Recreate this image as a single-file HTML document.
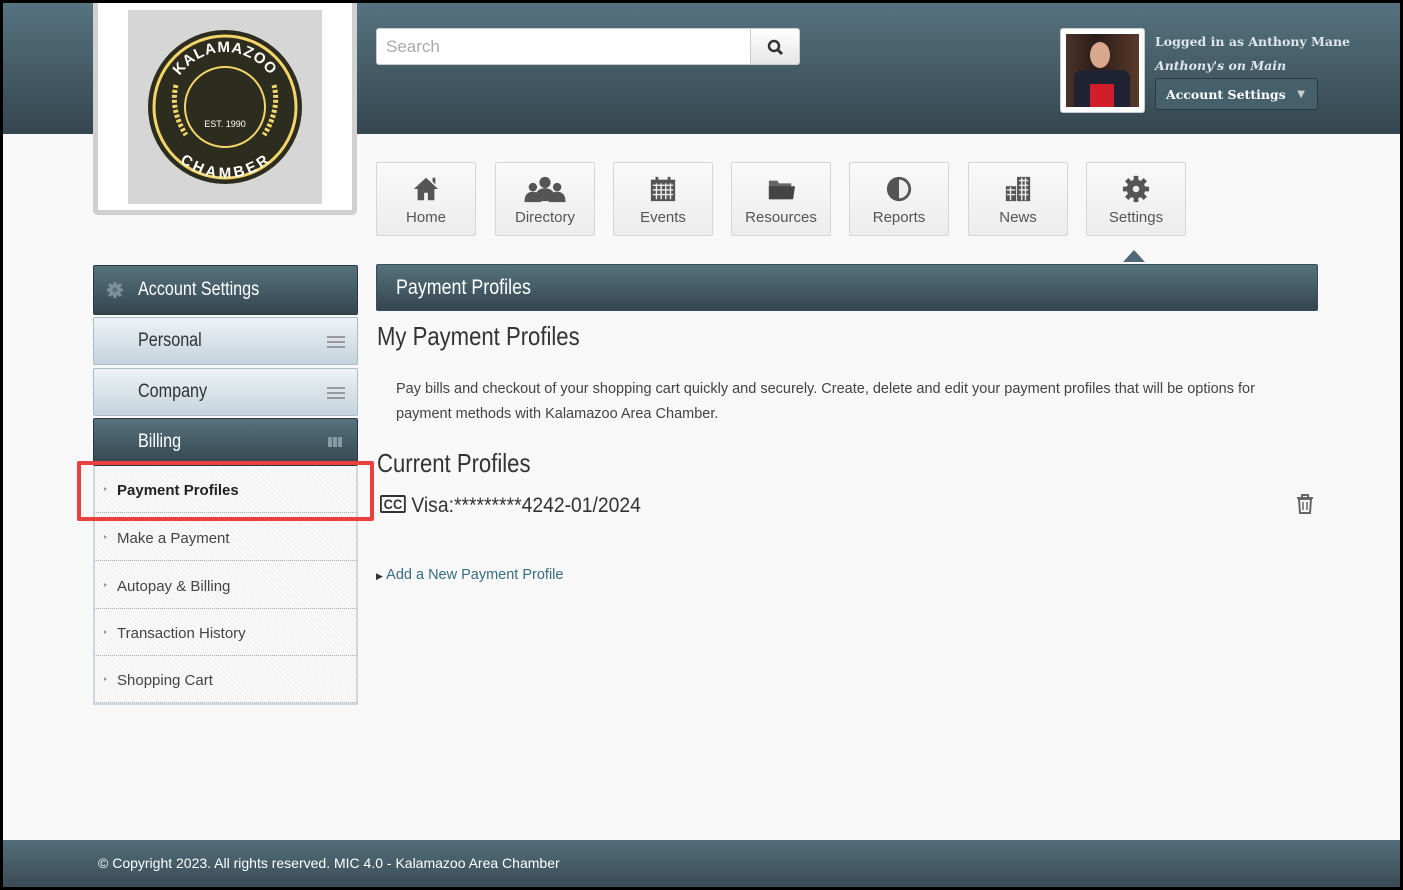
<!DOCTYPE html>
<html><head><meta charset="utf-8"><style>
*{box-sizing:border-box;margin:0;padding:0}
body{width:1403px;height:890px;background:#000;font-family:"Liberation Sans",sans-serif;position:relative;overflow:hidden}
.pg{position:absolute;left:3px;top:3px;width:1397px;height:884px;background:#f8f8f8;overflow:hidden}
.hdr{position:absolute;left:0;top:0;width:1397px;height:131px;background:linear-gradient(#56737f,#34464f)}
.ab{position:absolute}
.nar{display:inline-block;transform:scaleX(.85);transform-origin:0 0;white-space:nowrap}
.nav{position:absolute;top:159px;width:100px;height:74px;border:1px solid #d6d6d6;background:linear-gradient(#fafafa,#ececec);border-radius:2px;text-align:center;color:#555;font-size:15px}
.nav svg{display:block;margin:12px auto 6px;height:28px}
.side{position:absolute;left:90px;width:265px;border-radius:2px}
.dark{background:linear-gradient(#56727d,#34464f);color:#fff;border:1px solid #2a3840}
.light{background:linear-gradient(#eef3f6,#c4d3dc);border:1px solid #a8bccb;color:#333}
.lbl{position:absolute;left:44px;font-size:19px}
.item{position:absolute;left:91px;width:263px;height:47px;border-bottom:1px dotted #aab;font-size:15px;color:#444;padding:16px 0 0 23px}
.item:before{content:"";position:absolute;left:10px;top:21px;border-left:3px solid #999;border-top:2.5px solid transparent;border-bottom:2.5px solid transparent}
.srf{font-family:"DejaVu Serif",serif;font-weight:bold;font-size:12.5px;color:#dfe6ea;white-space:nowrap}
</style></head><body><div class="pg">
<div class="hdr"></div>
<div class="ab" style="left:90px;top:-3px;width:264px;height:215px;background:#fff;border:5px solid #d0d0d0;border-top:0;border-radius:0 0 5px 5px"></div>
<div class="ab" style="left:125px;top:7px;width:194px;height:194px;background:#d6d6d6">
<svg width="194" height="194" viewBox="0 0 194 194"><defs><path id="t1" d="M42 97a55 55 0 0 1 110 0"/><path id="t2" d="M38 97a59 59 0 0 0 118 0"/></defs>
<circle cx="97" cy="97" r="77" fill="#2d2d1f"/><circle cx="97" cy="97" r="71" fill="none" stroke="#f3d56a" stroke-width="3"/><circle cx="97" cy="97" r="40" fill="none" stroke="#f3d56a" stroke-width="2"/>
<text fill="#fff" font-size="15" font-weight="bold" letter-spacing="1"><textPath href="#t1" startOffset="50%" text-anchor="middle">KALAMAZOO</textPath></text>
<text fill="#fff" font-size="15" font-weight="bold" letter-spacing="1" dy="12"><textPath href="#t2" startOffset="50%" text-anchor="middle">CHAMBER</textPath></text>
<text x="97" y="117" text-anchor="middle" fill="#fff" font-size="9">EST. 1990</text>
<path d="M48 75 Q42 100 58 125 M146 75 Q152 100 136 125" stroke="#f3d56a" stroke-width="5" fill="none" stroke-dasharray="3 2"/></svg></div>
<div class="ab" style="left:373px;top:25px;width:375px;height:37px;background:#fff;border:1px solid #ccc;border-radius:3px 0 0 3px;color:#aaa;font-size:17px;padding:8px 9px">Search</div>
<div class="ab" style="left:747px;top:25px;width:50px;height:37px;background:linear-gradient(#fff,#e6e6e6);border:1px solid #ccc;border-radius:0 3px 3px 0">
<svg width="50" height="37"><circle cx="23" cy="17" r="5" fill="none" stroke="#333" stroke-width="2.5"/><path d="M27 21l4 4" stroke="#333" stroke-width="3"/></svg></div>
<div class="ab" style="left:1057px;top:25px;width:85px;height:85px;background:#fff;border:1px solid #ccc;border-radius:3px;padding:5px"><div style="width:73px;height:73px;background:linear-gradient(90deg,#4a3326,#2a1c18 40%,#5a3a2a);position:relative"><div style="position:absolute;left:24px;top:8px;width:20px;height:26px;border-radius:50%;background:#d9a78c"></div><div style="position:absolute;left:8px;top:36px;width:56px;height:37px;background:#1e2233;border-radius:8px 8px 0 0"></div><div style="position:absolute;left:24px;top:50px;width:24px;height:23px;background:#d11e2a"></div></div></div>
<div class="ab srf" style="left:1152px;top:31px">Logged in as Anthony Mane</div>
<div class="ab srf" style="left:1152px;top:55px;font-style:italic">Anthony's on Main</div>
<div class="ab srf" style="left:1152px;top:75px;width:163px;height:32px;background:#45606b;border:1px solid #2a3a42;border-radius:3px;color:#fff;padding:8px 10px">Account Settings<span style="font-size:10px;color:#ccc;position:absolute;right:12px;top:10px">▼</span></div>
<div class="nav" style="left:373px"><svg viewBox="0 0 30 30" width="30"><path d="M15 3 2 15h4v12h7v-8h4v8h7V15h4z M22 3h3v7l-3-3z" fill="#555"/></svg>Home</div>
<div class="nav" style="left:492px"><svg viewBox="0 0 46 30" width="46"><circle cx="23" cy="8" r="6" fill="#555"/><path d="M12 28q0-14 11-14t11 14z" fill="#555"/><circle cx="10" cy="13" r="4.5" fill="#555"/><path d="M1 29q0-11 9-11t9 11z" fill="#555"/><circle cx="36" cy="13" r="4.5" fill="#555"/><path d="M27 29q0-11 9-11t9 11z" fill="#555"/></svg>Directory</div>
<div class="nav" style="left:610px"><svg viewBox="0 0 30 30" width="30"><rect x="2" y="5" width="26" height="23" fill="#555"/><path d="M4 11h22M4 16h22M4 21h22M8 9v17M13 9v17M18 9v17M23 9v17" stroke="#eee" stroke-width="1.5"/><rect x="7" y="2" width="3" height="5" fill="#555"/><rect x="20" y="2" width="3" height="5" fill="#555"/></svg>Events</div>
<div class="nav" style="left:728px"><svg viewBox="0 0 30 30" width="30"><path d="M2 6h9l2 3h13v17H2z" fill="#666"/><path d="M2 12h28l-2 14H2z" fill="#444"/></svg>Resources</div>
<div class="nav" style="left:846px"><svg viewBox="0 0 30 30" width="30"><circle cx="15" cy="15" r="13" fill="#555"/><path d="M15 5a10 10 0 0 1 0 20z" fill="#eee"/></svg>Reports</div>
<div class="nav" style="left:965px"><svg viewBox="0 0 30 30" width="30"><rect x="14" y="2" width="14" height="26" fill="#555"/><rect x="2" y="12" width="11" height="16" fill="#555"/><path d="M16 6h10M16 11h10M16 16h10M16 21h10M19 3v24M23 3v24M3 16h9M3 21h9M7 13v14" stroke="#eee" stroke-width="1.5"/></svg>News</div>
<div class="nav" style="left:1083px"><svg viewBox="0 0 30 30" width="30"><circle cx="15" cy="15" r="10" fill="#555"/><path d="M15 1v28M1 15h28M5 5l20 20M25 5 5 25" stroke="#555" stroke-width="5"/><circle cx="15" cy="15" r="3.5" fill="#eee"/></svg>Settings</div>
<div class="ab" style="left:1120px;top:247px;border-left:11px solid transparent;border-right:11px solid transparent;border-bottom:12px solid #4f6a76"></div>
<div class="ab dark" style="left:373px;top:261px;width:942px;height:47px;border-radius:2px;font-size:21px;padding:11px 19px;border-color:#3a4d56"><span class="nar">Payment Profiles</span></div>
<div class="ab" style="left:374px;top:318px;font-size:26px;color:#333"><span class="nar">My Payment Profiles</span></div>
<div class="ab" style="left:393px;top:374px;width:910px;font-size:14.5px;line-height:25px;color:#444">Pay bills and checkout of your shopping cart quickly and securely. Create, delete and edit your payment profiles that will be options for payment methods with Kalamazoo Area Chamber.</div>
<div class="ab" style="left:374px;top:445px;font-size:26px;color:#333"><span class="nar">Current Profiles</span></div>
<div class="ab" style="left:377px;top:491px;font-size:21px;color:#333"><span class="nar" style="transform:scaleX(.92)"><span style="display:inline-block;border:2px solid #333;background:#fff;font-size:14px;font-weight:bold;padding:0 2px;line-height:14px;vertical-align:3px;border-radius:2px">CC</span> Visa:*********4242-01/2024</span></div>
<svg class="ab" style="left:1293px;top:491px" width="18" height="20"><path d="M1 4h16M6 4V1h6v3M3 5h12l-1 14H4z" stroke="#666" stroke-width="2" fill="none"/><path d="M7 8v8M11 8v8" stroke="#666" stroke-width="1.5"/></svg>
<div class="ab" style="left:373px;top:564px;font-size:14.5px;color:#3a6c86"><span style="font-size:9px;color:#333">▶</span> Add a New Payment Profile</div>
<div class="side dark" style="top:262px;height:50px"><svg class="ab" style="left:12px;top:15px" width="18" height="18"><circle cx="9" cy="9" r="6" fill="#7d8f97"/><path d="M9 1v16M1 9h16M3 3l12 12M15 3 3 15" stroke="#7d8f97" stroke-width="3"/><circle cx="9" cy="9" r="2.5" fill="#56727d"/></svg><span class="lbl nar" style="top:13px">Account Settings</span></div>
<div class="side light" style="top:314px;height:48px"><span class="lbl nar" style="top:12px">Personal</span><span class="ab" style="right:12px;top:18px;width:18px;height:12px;border-top:2px solid #999;border-bottom:2px solid #999"><span class="ab" style="left:0;right:0;top:3px;height:2px;background:#999"></span></span></div>
<div class="side light" style="top:365px;height:48px"><span class="lbl nar" style="top:12px">Company</span><span class="ab" style="right:12px;top:18px;width:18px;height:12px;border-top:2px solid #999;border-bottom:2px solid #999"><span class="ab" style="left:0;right:0;top:3px;height:2px;background:#999"></span></span></div>
<div class="side dark" style="top:415px;height:48px"><span class="lbl nar" style="top:12px">Billing</span><span class="ab" style="right:14px;top:18px;width:15px;height:10px;background:repeating-linear-gradient(90deg,#8a9aa2 0 4px,transparent 4px 5px)"></span></div>
<div class="ab" style="left:90px;top:463px;width:265px;height:239px;background:repeating-linear-gradient(45deg,#f4f4f4 0 2px,#f8f8f8 2px 4px);border:2px solid #cdd8e0;border-top:0"></div>
<div class="item" style="top:463px;font-weight:bold;color:#222">Payment Profiles</div>
<div class="item" style="top:511px">Make a Payment</div>
<div class="item" style="top:559px">Autopay &amp; Billing</div>
<div class="item" style="top:606px">Transaction History</div>
<div class="item" style="top:653px">Shopping Cart</div>
<div class="ab" style="left:74px;top:458px;width:297px;height:60px;border:4px solid #e8413f;border-radius:2px"></div>
<div class="ab" style="left:0;top:837px;width:1397px;height:47px;background:linear-gradient(#526e7a,#3a4c55);color:#fff;font-size:14px;padding:15px 95px">© Copyright 2023. All rights reserved. MIC 4.0 - Kalamazoo Area Chamber</div>
</div></body></html>
